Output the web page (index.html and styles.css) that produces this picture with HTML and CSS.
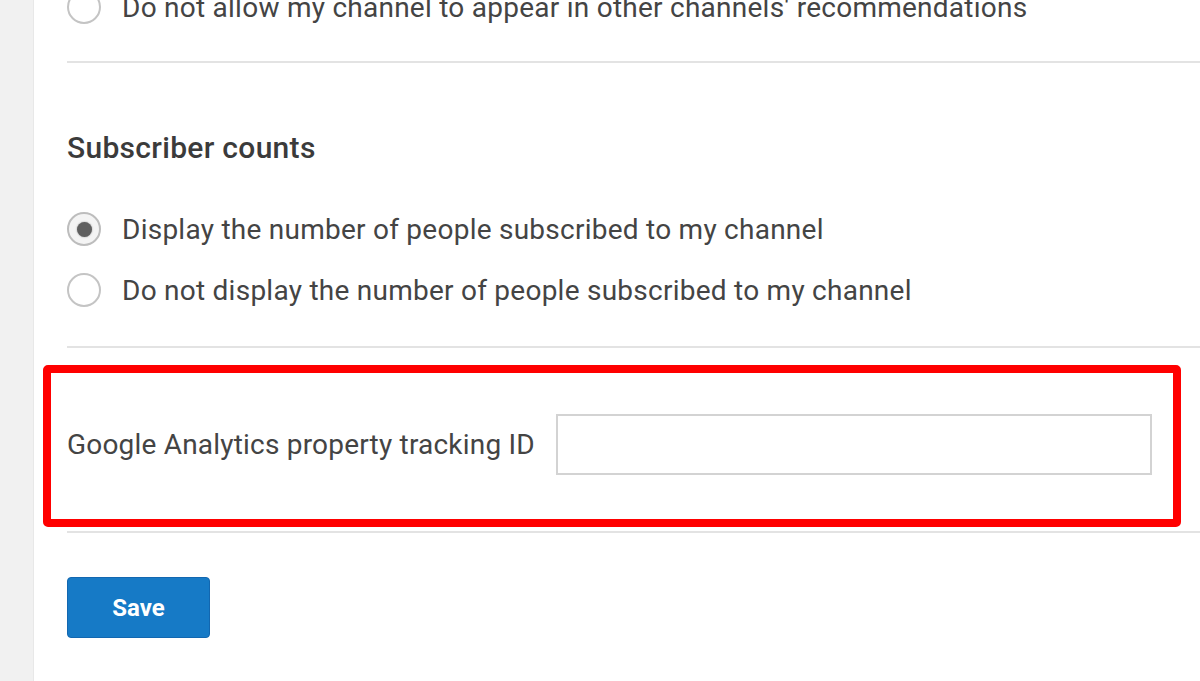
FILE: index.html
```html
<!DOCTYPE html>
<html lang="en">
<head>
  <meta charset="UTF-8">
  <title>Channel settings</title>
  <link rel="stylesheet" href="styles.css">
</head>
<body>
  <div class="page">
    <div class="sidebar"></div>

    <div class="content">
      <div class="section first">
        <label class="radio-row">
          <span class="radio"></span>
          <span>Do not allow my channel to appear in other channels' recommendations</span>
        </label>
      </div>

      <div class="section subs">
        <h3>Subscriber counts</h3>
        <div class="radio-list">
          <label class="radio-row">
            <span class="radio checked"></span>
            <span>Display the number of people subscribed to my channel</span>
          </label>
          <label class="radio-row">
            <span class="radio"></span>
            <span>Do not display the number of people subscribed to my channel</span>
          </label>
        </div>
      </div>

      <div class="section analytics">
        <div class="field-row">
          <span class="field-label">Google Analytics property tracking ID</span>
          <input type="text" class="field-input">
        </div>
        <div class="highlight"></div>
      </div>

      <button class="save-button">Save</button>
    </div>
  </div>
</body>
</html>
```

FILE: styles.css
```css
* {
  margin: 0;
  padding: 0;
  box-sizing: border-box;
}

html, body {
  width: 1200px;
  height: 681px;
  overflow: hidden;
}

body {
  font-family: Roboto, 'Liberation Sans', Arial, sans-serif;
  background: #fff;
  color: #444;
}

.page {
  display: flex;
  height: 100%;
}

.sidebar {
  width: 34px;
  flex-shrink: 0;
  background: #f1f1f1;
  border-right: 1px solid #e8e8e8;
}

.content {
  flex: 1;
  padding-left: 33px;
}

.section {
  border-bottom: 2px solid #e3e3e3;
  position: relative;
}

.section.first {
  margin-top: -13px;
  padding-bottom: 34px;
}

.section.subs {
  padding-top: 67px;
  padding-bottom: 36px;
}

.section.analytics {
  padding-top: 66px;
  padding-bottom: 56px;
}

h3 {
  font-size: 30px;
  font-weight: 500;
  line-height: 36px;
  letter-spacing: 0.3px;
  color: #3b3b3b;
}

.radio-list {
  margin-top: 43px;
  display: flex;
  flex-direction: column;
  gap: 21px;
}

.radio-row {
  display: flex;
  align-items: center;
  gap: 21px;
  height: 40px;
  font-size: 28px;
  letter-spacing: 0.25px;
  color: #444;
  white-space: nowrap;
}

.radio {
  width: 34px;
  height: 34px;
  border: 2px solid #c4c4c4;
  border-radius: 50%;
  background: #fff;
  flex-shrink: 0;
  display: flex;
  align-items: center;
  justify-content: center;
}

.radio.checked {
  border-color: #bdbdbd;
  background: #f4f4f4;
}

.radio.checked::after {
  content: '';
  width: 15px;
  height: 15px;
  border-radius: 50%;
  background: #5f5f5f;
  box-shadow: 0 0 2px rgba(0, 0, 0, 0.4);
}

.field-row {
  display: flex;
  align-items: center;
  gap: 21px;
}

.field-label {
  font-size: 28px;
  letter-spacing: 0.2px;
  color: #444;
  white-space: nowrap;
}

.field-input {
  width: 596px;
  height: 61px;
  border: 2px solid #d3d3d3;
  background: #fff;
  outline: none;
  font-family: inherit;
  font-size: 24px;
}

/* annotation box drawn over the row */
.highlight {
  position: absolute;
  top: 17px;
  left: -24px;
  width: 1138px;
  height: 162px;
  border: 8px solid #ff0000;
  border-radius: 5px;
  pointer-events: none;
}

.save-button {
  margin-top: 44px;
  width: 143px;
  height: 61px;
  background: #167ac6;
  color: #fff;
  border: 1px solid #1267b0;
  border-radius: 4px;
  font-family: inherit;
  font-size: 24px;
  font-weight: 700;
  cursor: pointer;
}
```
